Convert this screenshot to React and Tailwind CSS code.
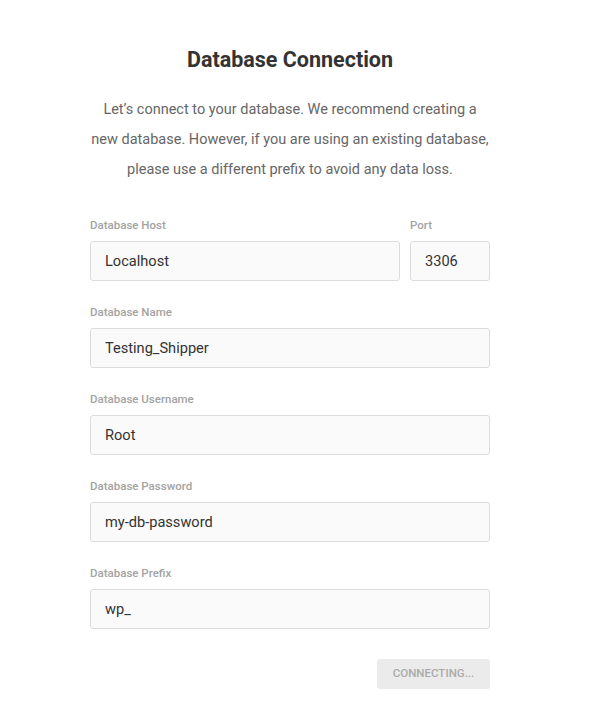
const fields = [
  { label: 'Database Name', value: 'Testing_Shipper' },
  { label: 'Database Username', value: 'Root' },
  { label: 'Database Password', value: 'my-db-password' },
  { label: 'Database Prefix', value: 'wp_' },
]

const inputCls =
  'h-[40px] w-full rounded-[3px] border border-[#dcdcdc] bg-[#fafafa] px-[14px] text-[14.6px] text-[#333] outline-none'

function Field({ label, value, className = '' }) {
  return (
    <div className={className}>
      <label className="block text-[11.5px] font-medium leading-[16px] text-[#a3a3a3]">{label}</label>
      <input className={`${inputCls} mt-[8px]`} defaultValue={value} readOnly />
    </div>
  )
}

export default function App() {
  return (
    <div className="min-h-screen bg-white" style={{ fontFamily: 'Roboto, "Noto Sans", sans-serif' }}>
      <div className="ml-[90px] w-[400px] pt-[46px]">
        <h1 className="text-center text-[21.5px] font-bold leading-[28px] text-[#333]">
          Database Connection
        </h1>
        <p className="mt-[21px] whitespace-nowrap text-center text-[14.5px] leading-[30px] text-[#666]">
          Let’s connect to your database. We recommend creating a
          <br />
          new database. However, if you are using an existing database,
          <br />
          please use a different prefix to avoid any data loss.
        </p>

        <div className="mt-[32px] flex gap-[10px]">
          <Field label="Database Host" value="Localhost" className="flex-1" />
          <Field label="Port" value="3306" className="w-[80px]" />
        </div>

        {fields.map((f) => (
          <Field key={f.label} label={f.label} value={f.value} className="mt-[23px]" />
        ))}

        <div className="mt-[30px] flex justify-end">
          <button
            disabled
            className="h-[30px] w-[113px] rounded-[3px] bg-[#ebebeb] text-[11.5px] font-medium text-[#aaa]"
          >
            CONNECTING...
          </button>
        </div>
      </div>
    </div>
  )
}
